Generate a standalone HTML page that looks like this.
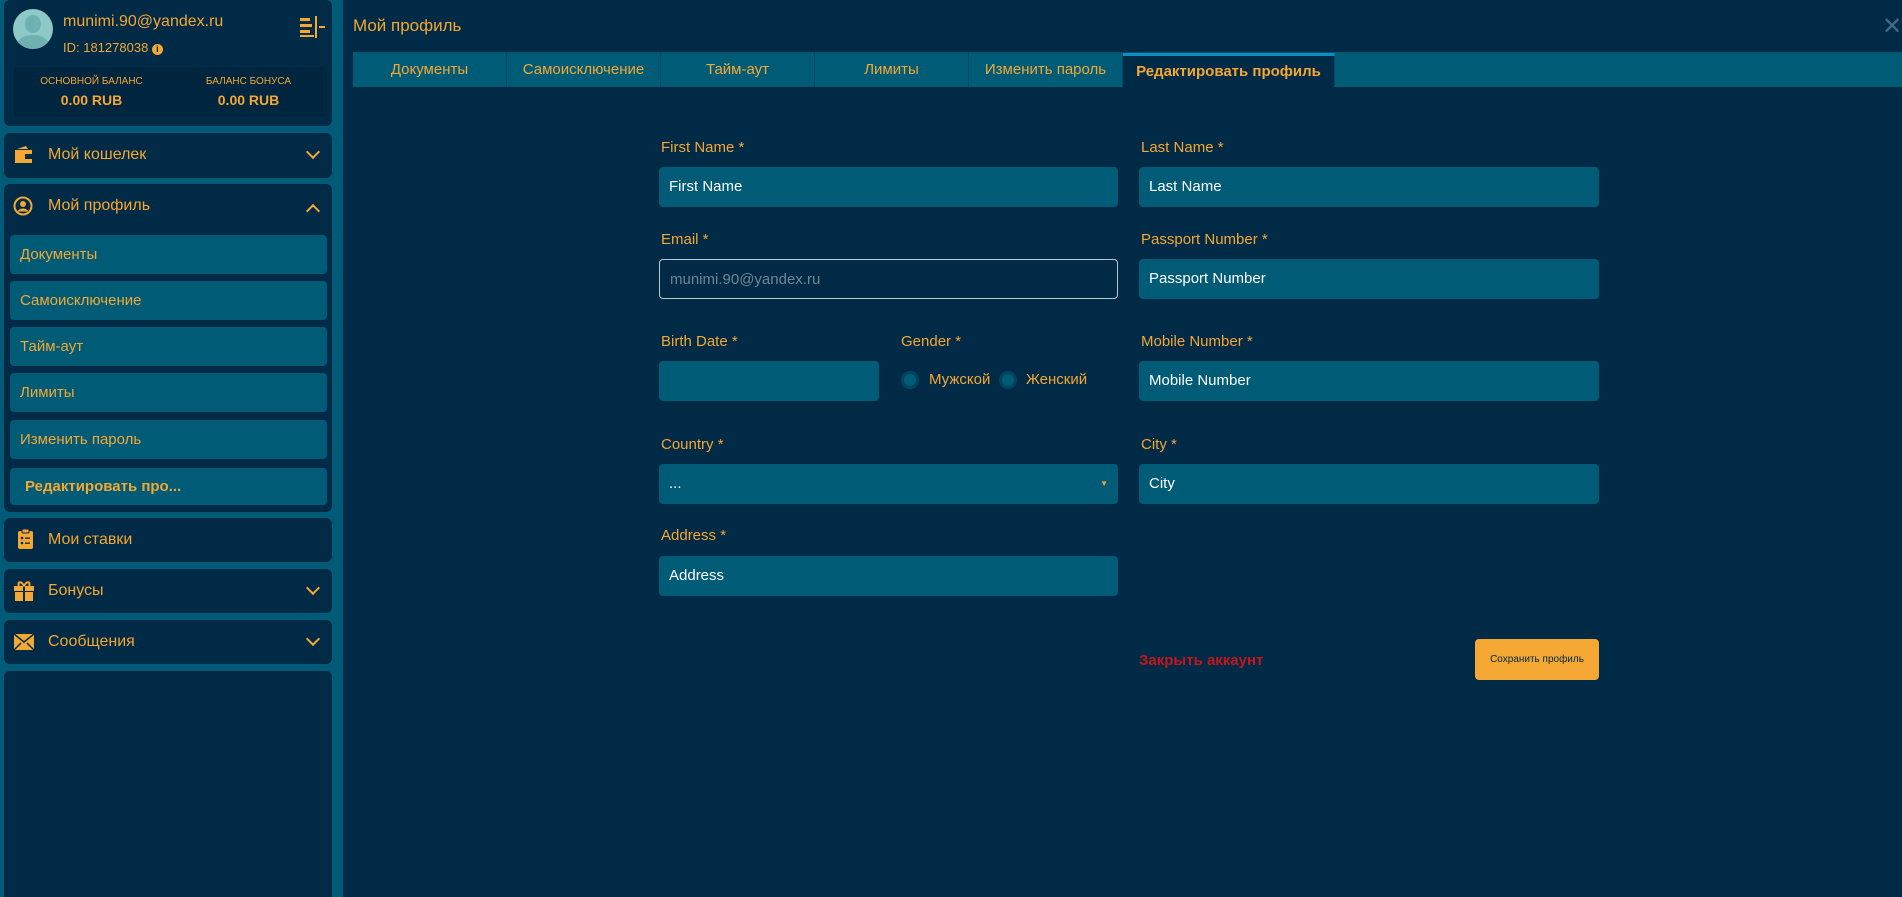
<!DOCTYPE html>
<html style="width:1902px;height:897px;overflow:hidden"><head><meta charset="utf-8"><style>
*{box-sizing:border-box;margin:0;padding:0}
body{width:1902px;height:897px;background:#015b78;font-family:"Liberation Sans","DejaVu Sans",sans-serif;color:#f4a733;position:relative;overflow:hidden}
.a{position:absolute}
.card{position:absolute;left:4px;width:328px;background:#002a46;border-radius:6px}
.hd{position:absolute;left:44px;font-size:16px}
.sub{position:absolute;left:6px;width:317px;height:39px;background:#005b77;border-radius:4px;font-size:15px;line-height:39px;padding-left:10px}
.chev{position:absolute;right:14px;width:10px;height:10px;border-right:2.5px solid #f4a733;border-bottom:2.5px solid #f4a733}
.main{position:absolute;left:343px;top:0;width:1559px;height:897px;background:#002a46}
.tab{position:absolute;top:53px;height:34px;width:154px;background:#005b77;border-right:1px solid #00486a;text-align:center;font-size:15px;line-height:34px}
.lbl{position:absolute;font-size:15px}
.inp{position:absolute;height:40px;background:#005b77;border-radius:4px;font-size:15px;line-height:40px;padding-left:10px;color:#fff}
.rad{position:absolute;width:18px;height:18px;border-radius:50%;background:#005b77;border:3px solid #00445f}
</style></head><body>
<div class="card" style="top:0;height:126px">
 <div class="a" style="left:9px;top:9px;width:40px;height:40px;border-radius:50%;background:#8ec9c8;overflow:hidden">
  <div class="a" style="left:12px;top:6px;width:16px;height:18px;border-radius:50%;background:#6fb1b1"></div>
  <div class="a" style="left:4px;top:26px;width:32px;height:20px;border-radius:50%;background:#6fb1b1"></div></div>
 <div class="a" style="left:59px;top:13px;font-size:16px">munimi.90@yandex.ru</div>
 <div class="a" style="left:59px;top:40px;font-size:13px">ID: 181278038 <span style="display:inline-block;width:11px;height:11px;border-radius:50%;background:#f4a733;color:#002a46;font-size:9px;text-align:center;line-height:11px;font-weight:bold">i</span></div>
 <svg class="a" style="left:296px;top:16px" width="26" height="22"><g fill="#f4a733"><rect x="0" y="2" width="10" height="3"/><rect x="0" y="8" width="12" height="3"/><rect x="0" y="14" width="10" height="3"/><rect x="0" y="19" width="14" height="2"/><rect x="15" y="0" width="2" height="22"/><rect x="19" y="10" width="6" height="2"/></g></svg>
 <div class="a" style="left:9px;top:67px;width:314px;height:50px;background:#00253e;border-radius:4px"></div>
 <div class="a" style="left:9px;top:76px;width:157px;text-align:center;font-size:10px">ОСНОВНОЙ БАЛАНС</div>
 <div class="a" style="left:166px;top:76px;width:157px;text-align:center;font-size:10px">БАЛАНС БОНУСА</div>
 <div class="a" style="left:9px;top:92px;width:157px;text-align:center;font-size:14px;font-weight:bold">0.00 RUB</div>
 <div class="a" style="left:166px;top:92px;width:157px;text-align:center;font-size:14px;font-weight:bold">0.00 RUB</div>
</div>
<div class="card" style="top:133px;height:45px">
 <svg class="a" style="left:9px;top:12px" width="22" height="20"><path d="M2 5h17v13H2z" fill="#f4a733"/><path d="M4 4l9-3 2 3z" fill="#f4a733"/><rect x="12" y="9" width="8" height="5" fill="#002a46"/></svg>
 <div class="hd" style="top:13px">Мой кошелек</div><div class="chev" style="top:14px;transform:rotate(45deg)"></div></div>
<div class="card" style="top:184px;height:328px">
 <svg class="a" style="left:9px;top:12px" width="20" height="20"><circle cx="10" cy="10" r="8.5" fill="none" stroke="#f4a733" stroke-width="2"/><circle cx="10" cy="8" r="3" fill="#f4a733"/><path d="M4.5 15.5c2-4 9-4 11 0" fill="#f4a733"/></svg>
 <div class="hd" style="top:13px">Мой профиль</div><div class="chev" style="top:22px;transform:rotate(-135deg)"></div>
 <div class="sub" style="top:51px">Документы</div>
 <div class="sub" style="top:97px">Самоисключение</div>
 <div class="sub" style="top:143px">Тайм-аут</div>
 <div class="sub" style="top:189px">Лимиты</div>
 <div class="sub" style="top:236px">Изменить пароль</div>
 <div class="sub" style="top:284px;height:37px;line-height:37px;padding-left:15px;font-weight:bold">Редактировать про...</div>
</div>
<div class="card" style="top:518px;height:44px">
 <svg class="a" style="left:13px;top:10px" width="17" height="22"><rect x="1" y="3" width="15" height="18" rx="2" fill="#f4a733"/><rect x="5" y="1" width="7" height="4" rx="1" fill="#f4a733" stroke="#002a46"/><g fill="#002a46"><circle cx="5" cy="10" r="1.3"/><circle cx="5" cy="15" r="1.3"/><rect x="8" y="9.5" width="5" height="1.3"/><rect x="8" y="14.5" width="5" height="1.3"/></g></svg>
 <div class="hd" style="top:13px">Мои ставки</div></div>
<div class="card" style="top:569px;height:44px">
 <svg class="a" style="left:9px;top:11px" width="22" height="22"><rect x="1" y="6" width="20" height="5" fill="#f4a733"/><rect x="2" y="12" width="18" height="9" fill="#f4a733"/><rect x="10" y="6" width="2" height="15" fill="#002a46"/><path d="M11 6C8 0 4 2 6 6M11 6c3-6 7-4 5 0" stroke="#f4a733" stroke-width="2" fill="none"/></svg>
 <div class="hd" style="top:13px">Бонусы</div><div class="chev" style="top:14px;transform:rotate(45deg)"></div></div>
<div class="card" style="top:620px;height:44px">
 <svg class="a" style="left:9px;top:13px" width="22" height="18"><rect x="1" y="1" width="20" height="16" fill="#f4a733"/><path d="M1 1l10 8 10-8M1 17l7-7M21 17l-7-7" stroke="#002a46" stroke-width="1.5" fill="none"/></svg>
 <div class="hd" style="top:13px">Сообщения</div><div class="chev" style="top:14px;transform:rotate(45deg)"></div></div>
<div class="card" style="top:671px;height:226px;border-radius:6px 6px 0 0"></div>

<div class="main">
 <div class="a" style="left:10px;top:16px;font-size:17px">Мой профиль</div>
 <div class="a" style="left:1539px;top:12px;font-size:24px;color:#3d6e86">✕</div>
 <div class="a" style="left:10px;top:52px;width:1549px;height:35px;background:#005b77;border-top:1px solid #0a4e6c"></div>
 <div class="tab" style="left:10px">Документы</div>
 <div class="tab" style="left:164px">Самоисключение</div>
 <div class="tab" style="left:318px">Тайм-аут</div>
 <div class="tab" style="left:472px">Лимиты</div>
 <div class="tab" style="left:626px">Изменить пароль</div>
 <div class="tab" style="left:780px;width:212px;background:#002a46;border-top:3px solid #0a8fc4;font-weight:bold;line-height:32px">Редактировать профиль</div>
</div>
<div class="lbl" style="left:661px;top:139px">First Name *</div>
<div class="inp" style="left:659px;top:167px;width:459px">First Name</div>
<div class="lbl" style="left:1141px;top:139px">Last Name *</div>
<div class="inp" style="left:1139px;top:167px;width:460px">Last Name</div>
<div class="lbl" style="left:661px;top:231px">Email *</div>
<div class="inp" style="left:659px;top:259px;width:459px;background:#002a46;border:1px solid #b8c8d2;color:#6e8793">munimi.90@yandex.ru</div>
<div class="lbl" style="left:1141px;top:231px">Passport Number *</div>
<div class="inp" style="left:1139px;top:259px;width:460px">Passport Number</div>
<div class="lbl" style="left:661px;top:333px">Birth Date *</div>
<div class="inp" style="left:659px;top:361px;width:220px"></div>
<div class="lbl" style="left:901px;top:333px">Gender *</div>
<div class="rad" style="left:901px;top:371px"></div><div class="lbl" style="left:929px;top:371px">Мужской</div>
<div class="rad" style="left:999px;top:371px"></div><div class="lbl" style="left:1026px;top:371px">Женский</div>
<div class="lbl" style="left:1141px;top:333px">Mobile Number *</div>
<div class="inp" style="left:1139px;top:361px;width:460px">Mobile Number</div>
<div class="lbl" style="left:661px;top:436px">Country *</div>
<div class="inp" style="left:659px;top:464px;width:459px">...<span class="a" style="right:10px;top:0;font-size:8px;color:#f4a733">▼</span></div>
<div class="lbl" style="left:1141px;top:436px">City *</div>
<div class="inp" style="left:1139px;top:464px;width:460px">City</div>
<div class="lbl" style="left:661px;top:527px">Address *</div>
<div class="inp" style="left:659px;top:556px;width:459px">Address</div>
<div class="a" style="left:1139px;top:652px;font-size:15px;font-weight:bold;color:#c4161c">Закрыть аккаунт</div>
<div class="a" style="left:1475px;top:639px;width:124px;height:41px;background:#f4a733;border-radius:4px;color:#002a46;font-size:10px;text-align:center;line-height:41px">Сохранить профиль</div>
</body></html>
